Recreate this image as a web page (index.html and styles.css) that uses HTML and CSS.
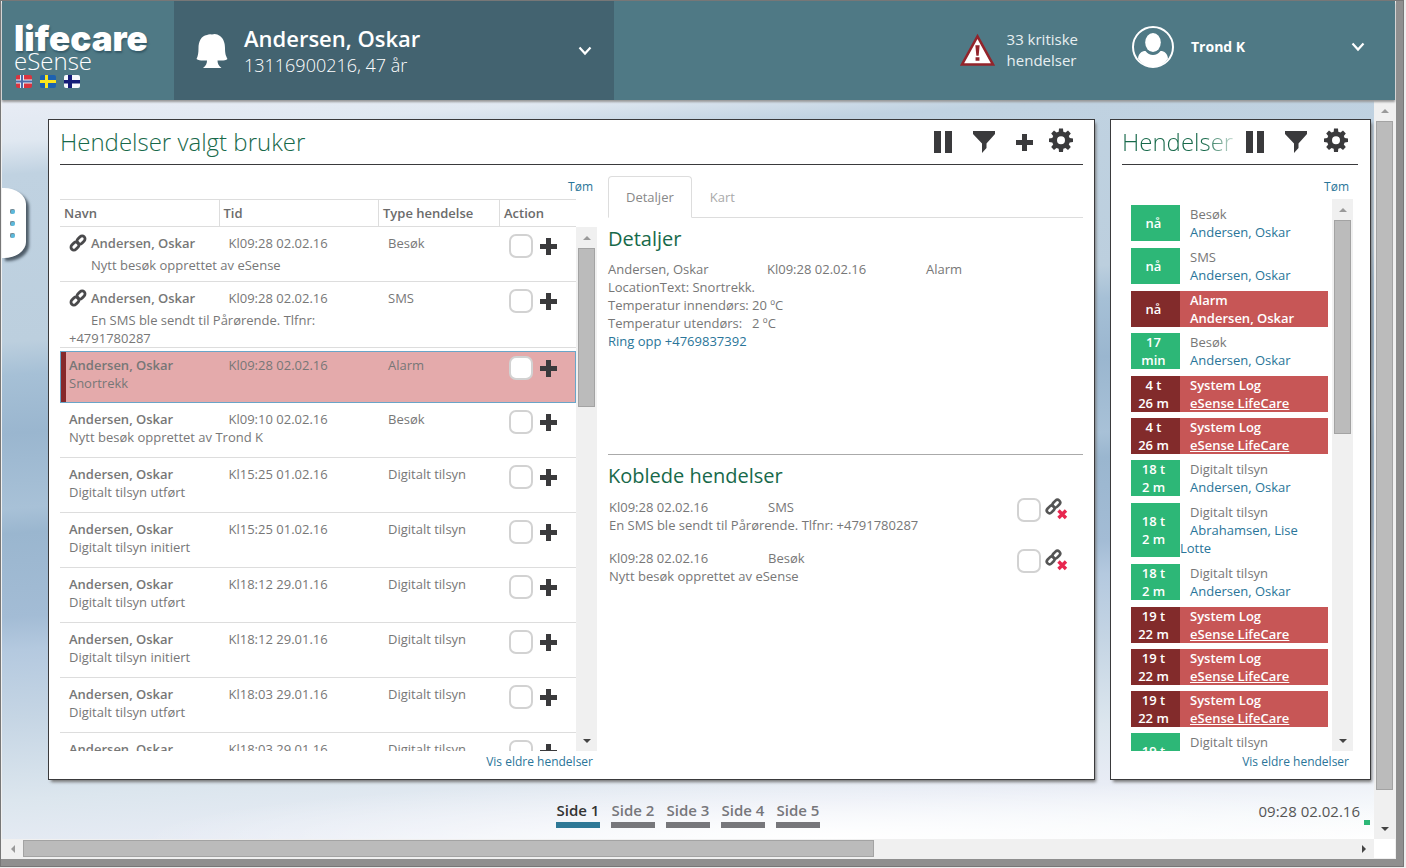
FILE: index.html
```html
<!DOCTYPE html>
<html lang="no">
<head>
<meta charset="utf-8">
<title>Lifecare eSense</title>
<link rel="stylesheet" href="styles.css">
</head>
<body>
<svg class="sprite" aria-hidden="true">
  <symbol id="plus" viewBox="0 0 17 17"><path d="M6 0h5v6h6v5h-6v6H6v-6H0V6h6z"/></symbol>
  <symbol id="pause" viewBox="0 0 18 22"><path d="M0 0h7v22H0zM11 0h7v22h-7z"/></symbol>
  <symbol id="funnel" viewBox="0 0 24 22"><path d="M1 0h22v3l-8.500 9.500V17L10 22v-9.500L1 3z"/></symbol>
  <symbol id="gear" viewBox="0 0 24 24"><path fill-rule="evenodd" d="M10 0.500h4l.3 3.200 2.200.9 2.500-2 2.800 2.800-2 2.500.9 2.200 3.300.4v3.500l-3.300.4-.9 2.200 2 2.500-2.800 2.800-2.500-2-2.200.9-.3 3.200h-4l-.3-3.200-2.200-.9-2.500 2-2.800-2.800 2-2.500-.9-2.200-3.300-.4V10.500l3.300-.4.900-2.200-2-2.500L5 2.600l2.500 2 2.200-.9zM12 8.200a4 4 0 1 0 0 8 4 4 0 0 0 0-8z"/></symbol>
  <symbol id="link" viewBox="0 0 18 18"><g fill="none" stroke="currentColor" stroke-width="2.800"><rect x="-4.500" y="-2.900" width="9" height="5.800" rx="2.900" transform="translate(12 6) rotate(-45)"/><rect x="-4.500" y="-2.900" width="9" height="5.800" rx="2.900" transform="translate(6 12) rotate(-45)"/></g></symbol>
  <symbol id="chevron" viewBox="0 0 14 10"><path d="M1.500 1.500 7 7.500l5.500-6" fill="none" stroke="currentColor" stroke-width="2.200"/></symbol>
  <symbol id="unlink" viewBox="0 0 24 22"><use href="#link" x="0" y="0" width="17" height="17"/><path d="m13.500 12.500 7.500 7.500m0-7.500L13.500 20" stroke="#e8274f" stroke-width="3.400"/></symbol>
</svg>
<div class="frame">
  <header class="top">
    <div class="brand">
      <div class="brand-name">lifecare</div>
      <div class="brand-sub">eSense</div>
      <div class="flags">
        <button class="flag" aria-label="Norsk"><svg viewBox="0 0 16 13"><path fill="#d9343f" d="M0 0h16v13H0z"/><path fill="#e8eef6" d="M4 0h4v13H4zM0 4.500h16v4H0z"/><path fill="#4a6aa8" d="M5 0h2v13H5zM0 5.500h16v2H0z"/></svg></button>
        <button class="flag" aria-label="Svenska"><svg viewBox="0 0 16 13"><path fill="#1d62b0" d="M0 0h16v13H0z"/><path fill="#fbe51c" d="M5 0h3v13H5zM0 5h16v3H0z"/></svg></button>
        <button class="flag" aria-label="Suomi"><svg viewBox="0 0 16 13"><path fill="#f6f8fc" d="M0 0h16v13H0z"/><path fill="#141c78" d="M4 0h4v13H4zM0 5h16v3.500H0z"/></svg></button>
      </div>
    </div>
    <button class="patient">
      <svg class="person" viewBox="0 0 32 34"><path fill="#fff" d="M11 1Q13 0 16 .5 20-1 24 2c4 3 5 8 5 12 0 6 1 8 2.500 11-2 2-6 1.500-10 1.500 0 3 1 5 4 7.500H7c3-2.500 4-4.500 4-7.500-4 0-8 .5-10.500-1.500C2 22 2.500 19 2.500 14 2.500 8 5 1.500 11 1z"/></svg>
      <span class="patient-text"><strong>Andersen, Oskar</strong><span>13116900216, 47 år</span></span>
      <svg class="chevron"><use href="#chevron"/></svg>
    </button>
    <div class="critical">
      <svg class="warning" viewBox="0 0 36 34"><path d="M18 3 34 32H2z" fill="#fff" stroke="#93242b" stroke-width="2.600"/><path d="M15.800 12h4.400l-1 11h-2.400zM16 24.500h4v3.500h-4z" fill="#93242b"/></svg>
      <span>33 kritiske<br>hendelser</span>
    </div>
    <button class="account">
      <svg class="avatar" viewBox="0 0 42 42"><circle cx="21" cy="21" r="20" fill="none" stroke="#fff" stroke-width="2"/><ellipse cx="21" cy="16.500" rx="7.800" ry="9.500" fill="#fff"/><path fill="#fff" d="M13.500 25q3 4 7.500 4t7.500-4c4 0 7 2.500 7.500 7.500A19 19 0 0 1 21 41 19 19 0 0 1 6 32.500C6.500 27.500 9.500 25 13.500 25z"/></svg>
      <strong>Trond K</strong>
      <svg class="chevron"><use href="#chevron"/></svg>
    </button>
  </header>

  <div class="viewport">
    <main class="stage">
      <button class="drawer" aria-label="Meny"><i></i><i></i><i></i></button>
      <div class="panels">
        <section class="panel panel-main">
          <div class="panel-head">
            <h2>Hendelser valgt bruker</h2>
            <div class="tools">
              <button aria-label="Pause"><svg class="i-pause"><use href="#pause"/></svg></button>
              <button aria-label="Filter"><svg class="i-funnel"><use href="#funnel"/></svg></button>
              <button aria-label="Legg til"><svg class="i-plus"><use href="#plus"/></svg></button>
              <button aria-label="Innstillinger"><svg class="i-gear"><use href="#gear"/></svg></button>
            </div>
          </div>
          <div class="split">
            <div class="events">
              <a class="clear" href="#">Tøm</a>
              <div class="scroller">
                <div class="table-clip">
                <table>
                  <colgroup><col><col><col class="c-type"><col class="c-action"></colgroup>
                  <thead><tr><th>Navn</th><th>Tid</th><th>Type hendelse</th><th>Action</th></tr></thead>
                  <tbody class="linked">
                    <tr><td><svg class="i-link"><use href="#link"/></svg><b>Andersen, Oskar</b></td><td>Kl09:28 02.02.16</td><td>Besøk</td><td class="act" rowspan="2"><div><input type="checkbox" aria-label="Velg"><button aria-label="Legg til"><svg class="i-plus"><use href="#plus"/></svg></button></div></td></tr>
                    <tr><td colspan="2">Nytt besøk opprettet av eSense</td><td></td></tr>
                  </tbody>
                  <tbody class="linked tight">
                    <tr><td><svg class="i-link"><use href="#link"/></svg><b>Andersen, Oskar</b></td><td>Kl09:28 02.02.16</td><td>SMS</td><td class="act" rowspan="2"><div><input type="checkbox" aria-label="Velg"><button aria-label="Legg til"><svg class="i-plus"><use href="#plus"/></svg></button></div></td></tr>
                    <tr><td colspan="2">En SMS ble sendt til Pårørende. Tlfnr: +4791780287</td><td></td></tr>
                  </tbody>
                  <tbody class="selected">
                    <tr><td><b>Andersen, Oskar</b></td><td>Kl09:28 02.02.16</td><td>Alarm</td><td class="act" rowspan="2"><div><input type="checkbox" aria-label="Velg"><button aria-label="Legg til"><svg class="i-plus"><use href="#plus"/></svg></button></div></td></tr>
                    <tr><td colspan="2">Snortrekk</td><td></td></tr>
                  </tbody>
                  <tbody>
                    <tr><td><b>Andersen, Oskar</b></td><td>Kl09:10 02.02.16</td><td>Besøk</td><td class="act" rowspan="2"><div><input type="checkbox" aria-label="Velg"><button aria-label="Legg til"><svg class="i-plus"><use href="#plus"/></svg></button></div></td></tr>
                    <tr><td colspan="2">Nytt besøk opprettet av Trond K</td><td></td></tr>
                  </tbody>
                  <tbody>
                    <tr><td><b>Andersen, Oskar</b></td><td>Kl15:25 01.02.16</td><td>Digitalt tilsyn</td><td class="act" rowspan="2"><div><input type="checkbox" aria-label="Velg"><button aria-label="Legg til"><svg class="i-plus"><use href="#plus"/></svg></button></div></td></tr>
                    <tr><td colspan="2">Digitalt tilsyn utført</td><td></td></tr>
                  </tbody>
                  <tbody>
                    <tr><td><b>Andersen, Oskar</b></td><td>Kl15:25 01.02.16</td><td>Digitalt tilsyn</td><td class="act" rowspan="2"><div><input type="checkbox" aria-label="Velg"><button aria-label="Legg til"><svg class="i-plus"><use href="#plus"/></svg></button></div></td></tr>
                    <tr><td colspan="2">Digitalt tilsyn initiert</td><td></td></tr>
                  </tbody>
                  <tbody>
                    <tr><td><b>Andersen, Oskar</b></td><td>Kl18:12 29.01.16</td><td>Digitalt tilsyn</td><td class="act" rowspan="2"><div><input type="checkbox" aria-label="Velg"><button aria-label="Legg til"><svg class="i-plus"><use href="#plus"/></svg></button></div></td></tr>
                    <tr><td colspan="2">Digitalt tilsyn utført</td><td></td></tr>
                  </tbody>
                  <tbody>
                    <tr><td><b>Andersen, Oskar</b></td><td>Kl18:12 29.01.16</td><td>Digitalt tilsyn</td><td class="act" rowspan="2"><div><input type="checkbox" aria-label="Velg"><button aria-label="Legg til"><svg class="i-plus"><use href="#plus"/></svg></button></div></td></tr>
                    <tr><td colspan="2">Digitalt tilsyn initiert</td><td></td></tr>
                  </tbody>
                  <tbody>
                    <tr><td><b>Andersen, Oskar</b></td><td>Kl18:03 29.01.16</td><td>Digitalt tilsyn</td><td class="act" rowspan="2"><div><input type="checkbox" aria-label="Velg"><button aria-label="Legg til"><svg class="i-plus"><use href="#plus"/></svg></button></div></td></tr>
                    <tr><td colspan="2">Digitalt tilsyn utført</td><td></td></tr>
                  </tbody>
                  <tbody>
                    <tr><td><b>Andersen, Oskar</b></td><td>Kl18:03 29.01.16</td><td>Digitalt tilsyn</td><td class="act" rowspan="2"><div><input type="checkbox" aria-label="Velg"><button aria-label="Legg til"><svg class="i-plus"><use href="#plus"/></svg></button></div></td></tr>
                    <tr><td colspan="2"></td><td></td></tr>
                  </tbody>
                </table>
                </div>
                <div class="vbar under-head"><span class="arrow up"></span><div class="track"><div class="thumb" style="height:33%"></div></div><span class="arrow down"></span></div>
              </div>
              <a class="older" href="#">Vis eldre hendelser</a>
            </div>

            <div class="details">
              <nav class="tabs"><a class="active" href="#">Detaljer</a><a href="#">Kart</a></nav>
              <section class="detail-body">
                <h3>Detaljer</h3>
                <div class="cols"><span>Andersen, Oskar</span><span>Kl09:28 02.02.16</span><span>Alarm</span></div>
                <div>LocationText: Snortrekk.</div>
                <dl><dt>Temperatur innendørs:</dt><dd>20 ºC</dd><dt>Temperatur utendørs:</dt><dd>2 ºC</dd></dl>
                <a href="#">Ring opp +4769837392</a>
              </section>
              <section class="related">
                <h3>Koblede hendelser</h3>
                <div class="rel">
                  <div class="rel-text"><div class="cols"><span>Kl09:28 02.02.16</span><span>SMS</span></div><div>En SMS ble sendt til Pårørende. Tlfnr: +4791780287</div></div>
                  <input type="checkbox" aria-label="Velg"><button aria-label="Fjern kobling"><svg class="i-unlink"><use href="#unlink"/></svg></button>
                </div>
                <div class="rel">
                  <div class="rel-text"><div class="cols"><span>Kl09:28 02.02.16</span><span>Besøk</span></div><div>Nytt besøk opprettet av eSense</div></div>
                  <input type="checkbox" aria-label="Velg"><button aria-label="Fjern kobling"><svg class="i-unlink"><use href="#unlink"/></svg></button>
                </div>
              </section>
            </div>
          </div>
        </section>

        <section class="panel panel-side">
          <div class="panel-head">
            <h2 class="fade">Hendelser</h2>
            <div class="tools">
              <button aria-label="Pause"><svg class="i-pause"><use href="#pause"/></svg></button>
              <button aria-label="Filter"><svg class="i-funnel"><use href="#funnel"/></svg></button>
              <button aria-label="Innstillinger"><svg class="i-gear"><use href="#gear"/></svg></button>
            </div>
          </div>
          <div class="feed-wrap">
            <a class="clear" href="#">Tøm</a>
            <div class="scroller">
              <ul class="feed">
                <li><span class="age">nå</span><div><span class="kind">Besøk</span><a href="#">Andersen, Oskar</a></div></li>
                <li><span class="age">nå</span><div><span class="kind">SMS</span><a href="#">Andersen, Oskar</a></div></li>
                <li class="alert"><span class="age">nå</span><div><span class="kind">Alarm</span><a href="#">Andersen, Oskar</a></div></li>
                <li><span class="age">17<br>min</span><div><span class="kind">Besøk</span><a href="#">Andersen, Oskar</a></div></li>
                <li class="alert system"><span class="age">4 t<br>26 m</span><div><span class="kind">System Log</span><a href="#">eSense LifeCare</a></div></li>
                <li class="alert system"><span class="age">4 t<br>26 m</span><div><span class="kind">System Log</span><a href="#">eSense LifeCare</a></div></li>
                <li><span class="age">18 t<br>2 m</span><div><span class="kind">Digitalt tilsyn</span><a href="#">Andersen, Oskar</a></div></li>
                <li><span class="age">18 t<br>2 m</span><div><span class="kind">Digitalt tilsyn</span><a href="#">Abrahamsen, Lise Lotte</a></div></li>
                <li><span class="age">18 t<br>2 m</span><div><span class="kind">Digitalt tilsyn</span><a href="#">Andersen, Oskar</a></div></li>
                <li class="alert system"><span class="age">19 t<br>22 m</span><div><span class="kind">System Log</span><a href="#">eSense LifeCare</a></div></li>
                <li class="alert system"><span class="age">19 t<br>22 m</span><div><span class="kind">System Log</span><a href="#">eSense LifeCare</a></div></li>
                <li class="alert system"><span class="age">19 t<br>22 m</span><div><span class="kind">System Log</span><a href="#">eSense LifeCare</a></div></li>
                <li class="last"><span class="age">19 t</span><div><span class="kind">Digitalt tilsyn</span></div></li>
              </ul>
              <div class="vbar"><span class="arrow up"></span><div class="track"><div class="thumb" style="height:42%"></div></div><span class="arrow down"></span></div>
            </div>
            <a class="older" href="#">Vis eldre hendelser</a>
          </div>
        </section>
      </div>

      <footer class="bottom">
        <nav class="pages"><a class="current" href="#">Side 1</a><a href="#">Side 2</a><a href="#">Side 3</a><a href="#">Side 4</a><a href="#">Side 5</a></nav>
        <div class="clock"><time>09:28 02.02.16</time><i></i></div>
      </footer>
    </main>
    <div class="vbar page-bar"><span class="arrow up"></span><div class="track"><div class="thumb" style="height:96%"></div></div><span class="arrow down"></span></div>
    <div class="hbar"><span class="arrow left"></span><div class="track"><div class="thumb" style="width:64%"></div></div><span class="arrow right"></span></div>
  </div>
</div>
</body>
</html>
```

FILE: styles.css
```css
* { box-sizing: border-box; }
body {
  margin: 0;
  height: 100vh;
  padding: 0 2px 1px 0;
  background: #eee;
  color: #777;
  font: 13px/18px "Open Sans", "Noto Sans", sans-serif;
}
.sprite { position: absolute; width: 0; height: 0; }
svg { display: block; }
button { margin: 0; padding: 0; border: 0; background: none; color: inherit; font: inherit; cursor: pointer; }
a { color: #2a7599; text-decoration: none; }
h2, h3 { margin: 0; color: #17694a; }
ul, dl, dd { margin: 0; padding: 0; list-style: none; }
b { font-weight: 600; }

.frame {
  display: flex;
  flex-direction: column;
  height: 100%;
  border: solid #8f8f8f;
  border-width: 1px 8px 8px 1px;
  border-top-color: #a8a4a4;
  border-left-color: #6b6767;
  background: #f0f0f0;
  padding: 0 1px 1px 1px;
  outline: 1px solid #777;
  outline-offset: -1px;
}

/* Top bar */
.top {
  display: flex;
  flex: none;
  height: 99px;
  background: #4f7985;
  color: #fff;
  box-shadow: 0 2px 2px #999;
  position: relative;
  z-index: 1;
}
.brand { width: 172px; padding: 23px 0 0 12px; }
.brand-name { font: 900 35px/28px Inter, "Liberation Sans", sans-serif; text-shadow: 1px 2px 2px #355a68; }
.brand-sub { font-size: 24px; line-height: 18px; font-weight: 300; }
.flags { display: flex; gap: 8px; margin-top: 5px; padding-left: 2px; }
.flag { width: 16px; height: 13px; border-radius: 2px; overflow: hidden; }
.patient { display: flex; align-items: center; width: 440px; background: #436370; padding: 0 22px; text-align: left; }
.person { width: 32px; height: 34px; }
.patient-text { flex: 1; padding-left: 16px; }
.patient-text strong { display: block; font-size: 22px; line-height: 28px; font-weight: 600; }
.patient-text span { display: block; font-size: 18px; line-height: 26px; font-weight: 300; }
.chevron { width: 14px; height: 10px; }
.critical { display: flex; align-items: center; gap: 12px; margin-left: auto; padding-bottom: 2px; font-size: 15px; line-height: 21px; color: #e8eff1; }
.warning { width: 35px; height: 34px; }
.account { display: flex; align-items: center; width: 293px; margin-left: 24px; padding: 0 30px 8px; }
.avatar { width: 42px; height: 42px; margin-right: 17px; }
.account strong { flex: 1; text-align: left; font-size: 14px; }

/* Scrolling viewport */
.viewport { flex: 1; min-height: 0; display: grid; grid-template: minmax(0, 1fr) 19px / minmax(0, 1fr) 21px; background: #fff; }
.stage {
  position: relative;
  display: flex;
  flex-direction: column;
  padding-top: 19px;
  background:
    radial-gradient(ellipse 50% 60px at 60% 100%, #fff, transparent),
    linear-gradient(#e8ecf5, #dfe8f1 4%, #c0d2e1 9%, #bacddf 21%, #bccfde 49%, #a6c0d6 52%, #9ab6cf 65%, #dce6ee 73%, #e6ebf4 90%, #f5f8fb 96%, #fff);
  background:
    radial-gradient(ellipse 50% 60px at 60% 100%, #fff, transparent),
    linear-gradient(176deg, #e8ecf5, #e0e8f1 5%, #c0d2e1 9%, #bccfde 29%, #a6c0d6 33%, #9ab6cf 40%, #a8c1d7 49%, #9ab6cf 52%, #a3bcd5 62%, #b4c9df 66%, #c5d5e4 74%, #dce6ee 84%, #e8ecf5 91%, #f5f8fb 96%, #fff);
}
.vbar, .hbar { display: flex; background: #f0f0f0; }
.vbar { flex: none; flex-direction: column; width: 21px; padding: 0 2px; }
.hbar { padding: 1px 0; }
.track { flex: 1; min-width: 0; min-height: 0; }
.thumb { background: #bbb; border: 1px solid #a3a3a3; }
.hbar .thumb { height: 100%; }
.arrow { flex: none; display: flex; align-items: center; justify-content: center; width: 100%; height: 21px; }
.hbar .arrow { width: 21px; height: 100%; }
.arrow::before { content: ""; border: 4px solid transparent; }
.arrow.up::before { border-width: 0 4px 4px; border-bottom-color: #9a9a9a; }
.arrow.down::before { border-width: 4px 4px 0; border-top-color: #444; }
.arrow.left::before { border-width: 4px 4px 4px 0; border-right-color: #9a9a9a; }
.arrow.right::before { border-width: 4px 0 4px 4px; border-left-color: #444; }

.drawer {
  position: absolute;
  left: 0;
  top: 88px;
  display: grid;
  gap: 7px;
  align-content: center;
  width: 24px;
  height: 70px;
  padding-left: 8px;
  border-radius: 0 22px 22px 0 / 0 16px 16px 0;
  background: #fff;
  box-shadow: 3px 3px 3px #4d5b67;
}
.drawer i { width: 5px; height: 5px; border-radius: 2px; background: #5cb9dc; border: solid #6f8894; border-width: 1px 0 0 1px; }

.panels { flex: 1; min-height: 0; display: flex; gap: 15px; padding: 0 3px 0 46px; }
.panel { display: flex; flex-direction: column; min-width: 0; border: 1px solid #3a3a3c; background: #fff; box-shadow: 2px 3px 3px -1px #777; padding: 0 11px; }
.panel-main { flex: 1; }
.panel-side { width: 261px; padding-right: 12px; }
.panel-head { flex: none; display: flex; justify-content: space-between; height: 45px; border-bottom: 1px solid #3a3a3c; }
.panel-head h2 { font-size: 24px; line-height: 44px; font-weight: 300; }
.panel-head .fade { background: linear-gradient(90deg, #17694a 75%, #c8ddd4); background-clip: text; color: transparent; }
.tools { display: flex; align-items: center; gap: 16px; color: #3a3a3c; padding-right: 10px; }
.tools svg, .act svg { fill: currentColor; }
.tools .i-gear { margin-bottom: 5px; }
.i-pause { width: 18px; height: 22px; }
.i-funnel { width: 24px; height: 22px; margin: 0 4px; }
.panel-side .i-funnel { margin-right: 0; }
.i-plus { width: 17px; height: 17px; }
.i-gear { width: 24px; height: 24px; }
.i-link { display: inline-block; width: 18px; height: 18px; margin: 0 4px -2px 0; vertical-align: top; color: #4a4a4c; }
.i-unlink { width: 24px; height: 22px; color: #555; }

.split { flex: 1; min-height: 0; display: flex; gap: 11px; }
.events { display: flex; flex-direction: column; flex: 537; min-width: 0; }
.clear, .older { align-self: flex-end; font-size: 12px; }
.clear { margin: 13px 4px 3px 0; }
.older { margin: 2px 4px 8px 0; }
.scroller { flex: 1; min-height: 0; display: flex; }
.table-clip { flex: 1; min-width: 0; overflow: hidden; }
.under-head { margin-top: 28px; }

table { width: 100%; table-layout: fixed; border-spacing: 0; }
.c-type { width: 121px; }
.c-action { width: 76px; }
th { height: 28px; padding: 0 4px; text-align: left; font-weight: 600; color: #6b6b6b; border: solid #ddd; border-width: 1px 1px 1px 0; }
th:last-child { border-right: 0; }
td { padding: 0 0 0 9px; vertical-align: top; }
tr:first-child td { padding-top: 7px; }
tr:last-child td { height: 30px; border-bottom: 1px solid #ddd; }
tr td.act { border-bottom: 1px solid #ddd; }
.act div { display: flex; align-items: center; gap: 7px; height: 24px; color: #3a3a3c; }
.linked tr:first-child td { height: 29px; }
.linked tr:last-child td { height: 26px; }
.linked tr:last-child td:first-child { text-indent: 22px; }
.linked.tight tr:last-child td { height: 37px; }
.selected::before { content: ""; display: table-row; height: 3px; }
.selected td { background: #e4aaab; }
.selected tr td { border-color: #69a5c8; }
.selected tr:first-child td { padding-top: 4px; border-top: 1px solid #69a5c8; }
.selected tr td:first-child { border-left: 1px solid #69a5c8; padding-left: 8px; box-shadow: inset 5px 0 #86282b; }
.selected tr:last-child td { height: 29px; }
.selected tr td.act { border-color: #69a5c8; border-right: 1px solid #69a5c8; }

input[type="checkbox"] { appearance: none; flex: none; width: 24px; height: 24px; margin: 0; border: 2px solid #d2d2d2; border-radius: 7px; background: #fff; }

.details { flex: 475; min-width: 0; padding-top: 11px; }
.tabs { display: flex; height: 42px; border-bottom: 1px solid #ddd; }
.tabs a { height: 42px; padding: 11px 17px; color: #aaa; border: 1px solid transparent; }
.tabs .active { color: #888; background: #fff; border-color: #ddd #ddd #fff; border-radius: 4px 4px 0 0; }
h3 { font-size: 20px; line-height: 26px; font-weight: 400; }
.detail-body { height: 237px; padding-top: 8px; border-bottom: 1px solid #aaa; }
.detail-body h3 { margin-bottom: 8px; }
.related { padding-top: 8px; }
.related h3 { margin-bottom: 9px; }
.cols { display: grid; grid-template-columns: repeat(3, 159px); }
.rel .cols { grid-template-columns: 159px 1fr; }
dl { display: grid; grid-template-columns: 144px 1fr; }
.rel { display: flex; margin-bottom: 15px; padding: 0 14px 0 1px; gap: 4px; }
.rel-text { flex: 1; min-width: 0; }
.rel button { align-self: flex-start; }

.feed-wrap { flex: 1; min-height: 0; display: flex; flex-direction: column; padding: 0 5px 0 9px; }
.feed { flex: 1; min-width: 0; overflow: hidden; padding: 6px 4px 0 0; }
.feed li { display: flex; margin-bottom: 7px; }
.feed .age { flex: none; width: 49px; display: flex; align-items: center; justify-content: center; padding-right: 4px; text-align: center; background: #2db777; color: #fff; font-weight: 600; }
.feed .last { height: 36px; }
.kind { display: block; padding-left: 10px; }
.feed a { padding-left: 10px; }
.feed div { flex: 1; min-width: 0; }
.feed li.alert { margin-bottom: 6px; background: #c75656; color: #fff; font-weight: 600; }
.alert a { color: #fff; }
.alert .age { background: #822b2b; }
.feed .system a { padding-left: 0; margin-left: 10px; text-decoration: underline; }

.bottom { flex: none; display: grid; grid-template-columns: 1fr auto 1fr; height: 59px; padding: 21px 4px 0; }
.pages { grid-column: 2; display: flex; gap: 11px; font-size: 15px; font-weight: 600; }
.pages a { min-width: 44px; height: 27px; text-align: center; color: #77777b; border-bottom: 6px solid #77777b; }
.pages .current { color: #333; border-color: #2e7896; }
.clock { display: flex; justify-content: flex-end; align-items: flex-start; gap: 4px; font-size: 15px; line-height: 20px; color: #555; }
.clock i { width: 6px; height: 5px; margin-top: 19px; background: #2db777; }
```
